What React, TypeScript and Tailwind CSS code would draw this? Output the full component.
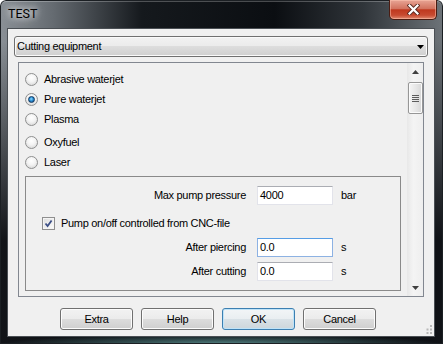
import React from 'react';

const ui = "font-['Liberation_Sans',Arial,sans-serif] text-[11px] tracking-[-0.3px] text-black";

function Radio({ label, checked }: { label: string; checked?: boolean }) {
  return (
    <div className="flex h-[20px] items-center">
      <span className="flex h-[13px] w-[13px] items-center justify-center rounded-full border border-[#8e8f8f] bg-[radial-gradient(circle_at_50%_35%,#ffffff_0%,#f3f3f3_45%,#cfcfcf_100%)]">
        {checked && (
          <span className="h-[7px] w-[7px] rounded-full border border-[#10375f] bg-[radial-gradient(circle_at_45%_40%,#8fdcff_0%,#2b8fd6_45%,#0e4378_100%)]" />
        )}
      </span>
      <span className="ml-[6px]">{label}</span>
    </div>
  );
}

function Field({ label, value, unit, focused }: { label: string; value: string; unit: string; focused?: boolean }) {
  return (
    <div className="flex h-[19px] items-center">
      <span className="w-[220px] text-right">{label}</span>
      <div
        className={
          focused
            ? 'ml-[11px] flex h-[19px] w-[76px] items-center border border-[#8db2e3] border-t-[#569de5] bg-white pl-[2px]'
            : 'ml-[11px] flex h-[19px] w-[76px] items-center border border-[#e2e3ea] border-t-[#abadb3] bg-white pl-[2px]'
        }
      >
        {value}
      </div>
      <span className="ml-[8px]">{unit}</span>
    </div>
  );
}

function Btn({ children, primary }: { children: React.ReactNode; primary?: boolean }) {
  return (
    <div
      className={
        primary
          ? 'flex h-[22px] w-[73px] items-center justify-center rounded-[3px] border border-[#3c7fb1] bg-[linear-gradient(to_bottom,#f2f5f7_0%,#e9eef1_50%,#dae2e7_50%,#cdd6db_100%)] shadow-[inset_0_0_0_1px_#bfe3f8]'
          : 'flex h-[22px] w-[73px] items-center justify-center rounded-[3px] border border-[#707070] bg-[linear-gradient(to_bottom,#f2f2f2_0%,#ebebeb_50%,#dddddd_50%,#cfcfcf_100%)] shadow-[inset_0_0_0_1px_#fcfcfc]'
      }
    >
      {children}
    </div>
  );
}

function Scrollbar() {
  return (
    <div className="flex w-[16px] flex-col items-center bg-[linear-gradient(to_right,#e8e8e8,#f4f4f4_40%,#eeeeee)]">
      <div className="flex h-[17px] items-center justify-center">
        <svg width="7" height="4" viewBox="0 0 7 4"><polygon points="3.5,0 7,4 0,4" fill="#404040" /></svg>
      </div>
      <div className="mt-[2px] flex h-[32px] w-[15px] flex-col items-center justify-center gap-[1px] rounded-[2px] border border-[#979797] bg-[linear-gradient(to_right,#f5f5f5,#e4e4e4_60%,#d6d6d6)] shadow-[inset_0_0_0_1px_#fbfbfb]">
        {[0, 1, 2, 3].map((i) => (
          <span key={i} className="h-[1px] w-[7px] bg-[#5c5c5c]" />
        ))}
      </div>
      <div className="flex-1" />
      <div className="flex h-[17px] items-center justify-center">
        <svg width="7" height="4" viewBox="0 0 7 4"><polygon points="0,0 7,0 3.5,4" fill="#404040" /></svg>
      </div>
    </div>
  );
}

export default function App() {
  return (
    <div
      className={`relative h-[344px] w-[443px] overflow-hidden rounded-t-[6px] bg-[radial-gradient(220px_10px_at_50%_100%,rgba(96,150,150,0.85),transparent),linear-gradient(to_bottom,transparent_0%,transparent_12%,rgba(8,10,14,0.92)_70%),linear-gradient(to_right,#8a9096_0%,#656b71_12%,#15191d_32%,#0b0e12_62%,#30353a_82%,#6d7378_100%)] shadow-[inset_0_0_0_1px_#1b1f23,inset_0_2px_0_rgba(255,255,255,0.25)] ${ui}`}
    >
      {/* title bar */}
      <div className="flex h-[28px] items-start justify-between">
        <span className="ml-[8px] mt-[7px] font-['Roboto',sans-serif] text-[12.5px] leading-[14px] tracking-normal [text-shadow:0_0_6px_#fff,0_0_10px_rgba(255,255,255,0.8)]">
          TEST
        </span>
        <div className="mr-[6px] flex h-[20px] w-[48px] items-center justify-center rounded-b-[5px] border border-t-0 border-[#4a1c12] bg-[linear-gradient(to_bottom,#e8a595_0%,#d2735f_45%,#bf381e_52%,#c84b31_80%,#e08a70_100%)] shadow-[inset_0_0_0_1px_rgba(255,200,180,0.5)]">
          <svg width="13" height="11" viewBox="0 0 13 11">
            <path d="M2.5 1.5 L10.5 9.5 M10.5 1.5 L2.5 9.5" stroke="#5a2a20" strokeWidth="4" strokeLinecap="square" />
            <path d="M2.5 1.5 L10.5 9.5 M10.5 1.5 L2.5 9.5" stroke="#ffffff" strokeWidth="2.2" strokeLinecap="square" />
          </svg>
        </div>
      </div>

      {/* client */}
      <div className="relative ml-[7px] h-[309px] w-[428px] border border-[#4a4f54] bg-[#f0f0f0]">
        <div className="ml-[6px] mt-[7px] flex h-[21px] w-[414px] items-center justify-between rounded-[3px] border border-[#707070] bg-[linear-gradient(to_bottom,#f2f2f2_0%,#ebebeb_50%,#dddddd_50%,#cfcfcf_100%)] pl-[2px] pr-[3px] shadow-[inset_0_0_0_1px_#fafafa]">
          <span>Cutting equipment</span>
          <svg width="7" height="4" viewBox="0 0 7 4"><polygon points="0,0 7,0 3.5,4" fill="#000" /></svg>
        </div>

        <div className="ml-[10px] mt-[5px] flex h-[235px] w-[406px] border border-[#828790] bg-[#f0f0f0]">
          <div className="flex flex-1 flex-col pl-[6px] pt-[6px]">
            <Radio label="Abrasive waterjet" />
            <Radio label="Pure waterjet" checked />
            <Radio label="Plasma" />
            <div className="mt-[3px]">
              <Radio label="Oxyfuel" />
            </div>
            <Radio label="Laser" />

            <div className="mt-[4px] flex h-[115px] w-[376px] flex-col border border-[#8a8a8a]">
              <div className="mt-[9px]">
                <Field label="Max pump pressure" value="4000" unit="bar" />
              </div>
              <div className="ml-[16px] mt-[12px] flex h-[13px] items-center">
                <span className="flex h-[13px] w-[13px] items-center justify-center border border-[#8f8f8f] bg-[linear-gradient(to_bottom_right,#dcdcdc,#fdfdfd)] shadow-[inset_0_0_0_1px_#f4f4f4]">
                  <svg width="9" height="9" viewBox="0 0 9 9">
                    <path d="M1.5 4.5 L3.6 7 L7.6 1.5" fill="none" stroke="#3c4f86" strokeWidth="1.8" />
                  </svg>
                </span>
                <span className="ml-[6px]">Pump on/off controlled from CNC-file</span>
              </div>
              <div className="mt-[8px]">
                <Field label="After piercing" value="0.0" unit="s" focused />
              </div>
              <div className="mt-[5px]">
                <Field label="After cutting" value="0.0" unit="s" />
              </div>
            </div>
          </div>
          <Scrollbar />
        </div>

        <div className="ml-[52px] mt-[11px] flex gap-[8px]">
          <Btn>Extra</Btn>
          <Btn>Help</Btn>
          <Btn primary>OK</Btn>
          <Btn>Cancel</Btn>
        </div>

        {/* size grip */}
        <svg className="absolute bottom-[2px] right-[1px]" width="8" height="9" viewBox="0 0 8 9">
          <rect x="5" y="0" width="2" height="2" fill="#b8b8b8" />
          <rect x="5" y="3.5" width="2" height="2" fill="#b8b8b8" />
          <rect x="1.5" y="3.5" width="2" height="2" fill="#b8b8b8" />
          <rect x="5" y="7" width="2" height="2" fill="#b8b8b8" />
          <rect x="1.5" y="7" width="2" height="2" fill="#b8b8b8" />
        </svg>
      </div>
    </div>
  );
}
